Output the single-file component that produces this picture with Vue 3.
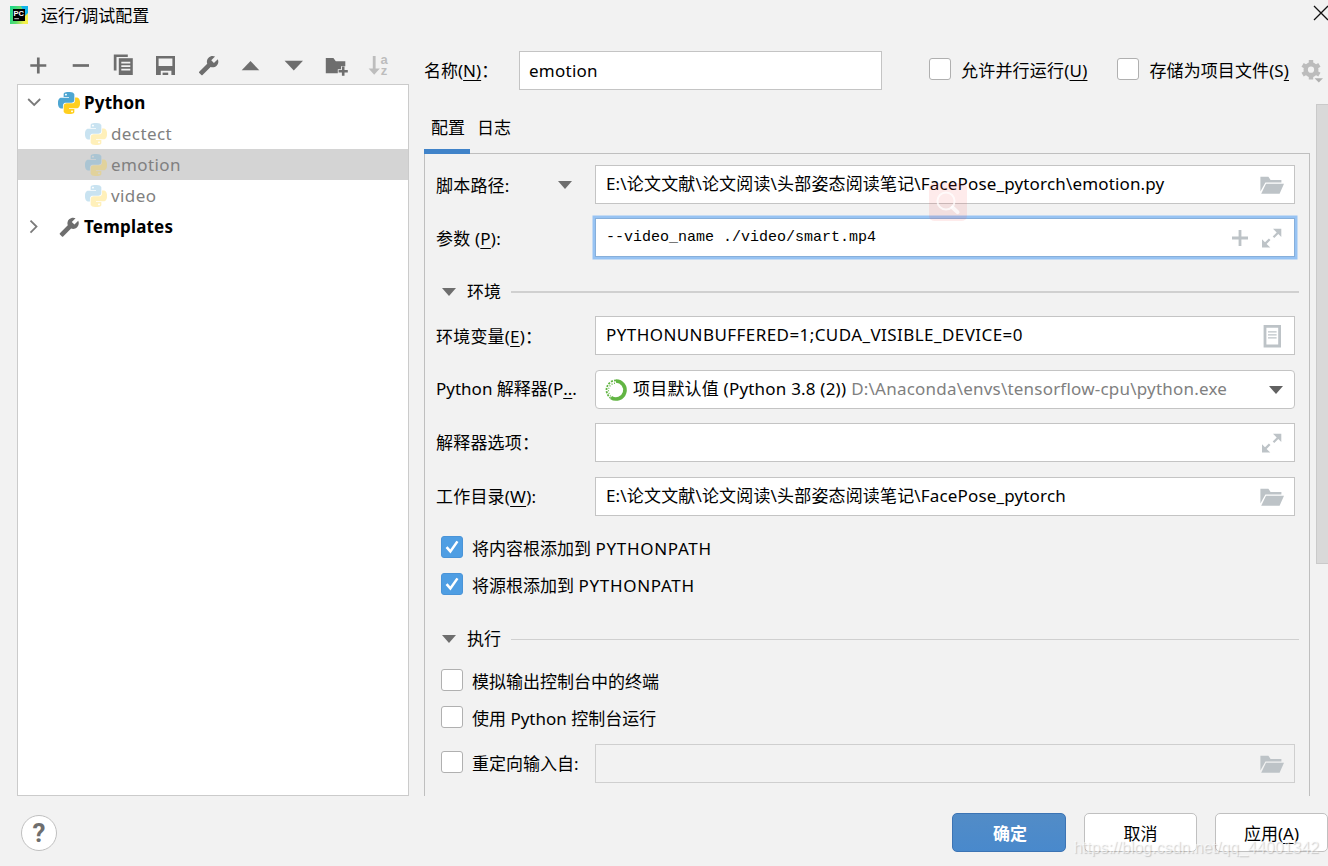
<template>
  <div class="dialog">
    <!-- 标题栏 -->
    <header class="titlebar">
      <svg class="app-icon" viewBox="0 0 18 18">
        <defs>
          <linearGradient id="pc" x1="0" y1="0.4" x2="1" y2="0.7">
            <stop offset="0" stop-color="#21d789" />
            <stop offset="0.45" stop-color="#5fdc6a" />
            <stop offset="0.85" stop-color="#f4f04a" />
          </linearGradient>
        </defs>
        <rect width="18" height="18" fill="url(#pc)" />
        <path d="M11 0h7v7l-3 3z" fill="#12b5ea" />
        <rect x="3" y="3" width="12" height="12" fill="#000" />
        <text x="3.4" y="9.6" class="app-icon__text">PC</text>
        <rect x="4.3" y="12.2" width="4.6" height="1" fill="#ccc" />
      </svg>
      <span class="titlebar__text">运行/调试配置</span>
      <svg class="titlebar__close" viewBox="0 0 16 16"><path d="M1 1l14 14M15 1L1 15" stroke="#111" stroke-width="1.3" /></svg>
    </header>

    <div class="main">
      <!-- 左侧配置列表 -->
      <aside class="sidebar">
        <div class="toolbar">
          <svg viewBox="0 0 24 24"><path d="M4.3 12.5h16M12.3 4.6v15.8" class="stroke" /></svg>
          <svg viewBox="0 0 24 24"><path d="M3.7 12.5H20" class="stroke" /></svg>
          <svg viewBox="0 0 24 24">
            <path d="M2.8 17.6V1.4h14v2.5H5.5v13.7z" />
            <path d="M7.8 5.2h14V22h-14z" />
            <path d="M10.3 9.6h9M10.3 13.1h9M10.3 16.6h9" stroke="#f2f2f2" stroke-width="1.6" />
          </svg>
          <svg viewBox="0 0 24 24">
            <path fill-rule="evenodd" d="M2 3h19v19h-3.6v-4.3H6.8V22H2zM4.6 5.6V13h13.8V5.6z" />
            <path d="M8.6 19.6h5.6V22H8.6z" />
          </svg>
          <svg viewBox="0 0 24 24"><path :d="wrench" transform="translate(23.2 2) scale(-.88 .88)" /></svg>
          <svg viewBox="0 0 24 24"><path d="M2.7 17.2L11.5 8l8.8 9.2z" /></svg>
          <svg viewBox="0 0 24 24"><path d="M2.6 7.8h18.4l-9.2 9.6z" /></svg>
          <svg viewBox="0 0 24 24">
            <path d="M1.8 5h7.6l2.4 3.2h9.5v5H17v3.1h-3.2v4H1.8z" />
            <path d="M19.2 13.6v9.2M14.6 18.2h9.2" stroke="#6e6e6e" stroke-width="2.6" />
          </svg>
          <svg viewBox="0 0 24 24" class="is-disabled">
            <path d="M5.8 3h2.8v12.6h4.2l-5.6 6.2-5.6-6.2h4.2z" />
            <text x="13.6" y="11">a</text>
            <text x="13.8" y="22.2">z</text>
          </svg>
        </div>

        <div class="tree">
          <div
            v-for="node in tree"
            :key="node.label"
            class="tree__row"
            :class="{ '-child': node.child, '-selected': node.label === selected }"
            @click="selected = node.label"
          >
            <svg v-if="!node.child" class="tree__arrow" viewBox="0 0 16 16">
              <path :d="node.open ? 'M2.2 4l6 6 6-6' : 'M4.5 1.6l6 6-6 6'" />
            </svg>
            <svg v-if="node.icon === 'python'" class="tree__icon" viewBox="0 0 24 24">
              <path :d="snake" fill="#4ea6d2" />
              <path :d="snake" fill="#ffcf1f" transform="rotate(180 12 12)" />
            </svg>
            <svg v-else class="tree__icon" viewBox="0 0 24 24">
              <path :d="wrench" fill="#6e6e6e" transform="translate(23.6 .8) scale(-.95 .95)" />
            </svg>
            <span>{{ node.label }}</span>
          </div>
        </div>
      </aside>

      <!-- 右侧表单 -->
      <section class="content">
        <div class="name-row">
          <label class="name-row__label">名称(<u>N)</u>：</label>
          <input v-model="name" class="field name-row__input" />
          <label class="check -parallel"><i class="check__box"></i><span>允许并行运行(<u>U)</u></span></label>
          <label class="check -store"><i class="check__box"></i><span>存储为项目文件(S<u>)</u></span></label>
          <svg class="gear" viewBox="0 0 24 24">
            <circle cx="11" cy="10.7" r="5.3" />
            <path d="M11 1v4M11 16.4v4M2.6 5.8l3.4 2M16 13.6l3.4 2M19.4 5.8l-3.4 2M6 13.6l-3.4 2" />
            <path d="M14.6 19.2h8.4l-4.2 4.2z" class="gear__drop" />
          </svg>
        </div>

        <div class="tabs">
          <div class="tabs__item -active">配置</div>
          <div class="tabs__item">日志</div>
        </div>

        <div class="panel">
          <div class="row">
            <div class="row__label -low">脚本路径:
              <svg class="drop" viewBox="0 0 14 8"><path d="M0 0h14L7 8z" /></svg>
            </div>
            <div class="field">
              <span class="path">E:\论文文献\论文阅读\头部姿态阅读笔记\FacePose_pytorch\emotion.py</span>
              <svg class="icon" viewBox="0 0 24 24"><path :d="folder" /></svg>
            </div>
          </div>
          <div class="row -params">
            <div class="row__label -low">参数 (<u>P</u>):</div>
            <div class="field -focus">
              <span class="mono">--video_name ./video/smart.mp4</span>
              <svg class="icon -plus" viewBox="0 0 24 24"><path d="M10.6 4h2.8v6.6H20v2.8h-6.6V20h-2.8v-6.6H4v-2.8h6.6z" /></svg>
              <svg class="icon" viewBox="0 0 24 24"><path :d="expand" /></svg>
            </div>
          </div>

          <div class="group -env">
            <svg class="drop" viewBox="0 0 14 8"><path d="M0 0h14L7 8z" /></svg>
            <span>环境</span><i></i>
          </div>

          <div class="row">
            <div class="row__label -low">环境变量(<u>E</u>)：</div>
            <div class="field">
              <span class="vars">PYTHONUNBUFFERED=1;CUDA_VISIBLE_DEVICE=0</span>
              <svg class="icon" viewBox="0 0 24 24">
                <path fill-rule="evenodd" d="M3.6 1h17.4v22.4H3.6zM6.4 3.8v16.8h11.8V3.8z" />
                <path d="M8 7.2h8.6v1.4H8zM8 10.2h8.6v1.4H8zM8 13.2h8.6v1.4H8z" />
              </svg>
            </div>
          </div>
          <div class="row">
            <div class="row__label -high">Python 解释器(P<u>..</u>.</div>
            <div class="field -select">
              <svg class="conda" viewBox="0 0 24 24">
                <path d="M12 3a9 9 0 1 1-5 16.5" />
                <path class="conda__dots" d="M12 2.4a9.6 9.6 0 0 0-5.5 17.4" />
                <path class="conda__dots -inner" d="M11 5.2a7.2 7.2 0 0 0-4.4 12.3" />
              </svg>
              <span class="sdk">项目默认值 (Python 3.8 (2))</span>
              <span class="sdk-path">D:\Anaconda\envs\tensorflow-cpu\python.exe</span>
              <svg class="drop" viewBox="0 0 14 8"><path d="M0 0h14L7 8z" /></svg>
            </div>
          </div>
          <div class="row -options">
            <div class="row__label">解释器选项：</div>
            <div class="field">
              <span></span>
              <svg class="icon" viewBox="0 0 24 24"><path :d="expand" /></svg>
            </div>
          </div>
          <div class="row -dir">
            <div class="row__label">工作目录(<u>W</u>):</div>
            <div class="field">
              <span class="path">E:\论文文献\论文阅读\头部姿态阅读笔记\FacePose_pytorch</span>
              <svg class="icon" viewBox="0 0 24 24"><path :d="folder" /></svg>
            </div>
          </div>

          <div class="checks">
            <label v-for="item in pathOptions" :key="item" class="check">
              <i class="check__box -checked">
                <svg viewBox="0 0 22 22"><path d="M5 11.2l4.2 4.6L17 4.8" /></svg>
              </i>
              <span>{{ item }} <span class="caps">PYTHONPATH</span></span>
            </label>
          </div>

          <div class="group -run">
            <svg class="drop" viewBox="0 0 14 8"><path d="M0 0h14L7 8z" /></svg>
            <span>执行</span><i></i>
          </div>

          <div class="checks -run">
            <label v-for="item in runOptions" :key="item" class="check"><i class="check__box"></i><span>{{ item }}</span></label>
          </div>
          <div class="row -redirect">
            <label class="check"><i class="check__box"></i><span>重定向输入自:</span></label>
            <div class="field -disabled">
              <span></span>
              <svg class="icon" viewBox="0 0 24 24"><path :d="folder" /></svg>
            </div>
          </div>
        </div>
      </section>
    </div>

    <footer class="footer">
      <button class="help">?</button>
      <button class="btn -primary">确定</button>
      <button class="btn">取消</button>
      <button class="btn">应用(<u>A</u>)</button>
    </footer>

    <div class="scrollbar"></div>
    <div class="search-badge">
      <svg viewBox="0 0 38 38"><circle cx="17" cy="18" r="8.6" /><path d="M23.5 24.5l5 4.6" class="handle" /></svg>
    </div>
    <div class="watermark">https://blog.csdn.net/qq_44001342</div>
  </div>
</template>

<script setup>
import { ref } from 'vue'

const name = ref('emotion')
const selected = ref('emotion')

const tree = [
  { label: 'Python', icon: 'python', open: true },
  { label: 'dectect', icon: 'python', child: true },
  { label: 'emotion', icon: 'python', child: true },
  { label: 'video', icon: 'python', child: true },
  { label: 'Templates', icon: 'wrench', open: false }
]

const pathOptions = ['将内容根添加到', '将源根添加到']
const runOptions = ['模拟输出控制台中的终端', '使用 Python 控制台运行']

// 图标路径
const wrench =
  'M22.7 19l-9.1-9.1c.9-2.3.4-5-1.5-6.9-2-2-5-2.4-7.4-1.3L9 6 6 9 1.6 4.7C.4 7.1.9 10.1 2.9 12.1c1.9 1.9 4.6 2.4 6.9 1.5l9.1 9.1c.4.4 1 .4 1.4 0l2.3-2.3c.5-.4.5-1.1.1-1.4z'
const folder = 'M.4 18.6V3.8h8l2.2 3.2h10.8v2.6H5.4zM6 10.8h18l-4.4 10H1.2z'
const expand =
  'M13 2.7h8.3V11l-3-3-4 4-1.6-1.6 4-4zM10.3 21.5H2v-8.2l3 3 3.9-3.9 1.6 1.6-3.9 3.9z'
const snake =
  'M14.25.18l.9.2.73.26.59.3.45.32.34.34.25.34.16.33.1.3.04.26.02.2-.01.13V8.5l-.05.63-.13.55-.21.46-.26.38-.3.31-.33.25-.35.19-.35.14-.33.1-.3.07-.26.04-.21.02H8.77l-.69.05-.59.14-.5.22-.41.27-.33.32-.27.35-.2.36-.15.37-.1.35-.07.32-.04.27-.02.21v3.06H3.17l-.21-.03-.28-.07-.32-.12-.35-.18-.36-.26-.36-.36-.35-.46-.32-.59-.28-.73-.21-.88-.14-1.05-.05-1.23.06-1.22.16-1.04.24-.87.32-.71.36-.57.4-.44.42-.33.42-.24.4-.16.36-.1.32-.05.24-.01h.16l.06.01h8.16v-.83H6.18l-.01-2.75-.02-.37.05-.34.11-.31.17-.28.25-.26.31-.23.38-.2.44-.18.51-.15.58-.12.64-.1.71-.06.77-.04.84-.02 1.27.05zm-6.3 1.98l-.23.33-.08.41.08.41.23.34.33.22.41.09.41-.09.33-.22.23-.34.08-.41-.08-.41-.23-.33-.33-.22-.41-.09-.41.09z'
</script>

<style>
body {
  margin: 0;
  overflow: hidden;
  background: #f2f2f2;
}
</style>

<style scoped>
* {
  box-sizing: border-box;
}

.dialog {
  position: relative;
  display: flex;
  flex-direction: column;
  width: 1328px;
  height: 866px;
  overflow: hidden;
  background: #f2f2f2;
  color: #000;
  font: 17px/24px 'Noto Sans', 'Noto Sans CJK SC', sans-serif;
  white-space: nowrap;
}

u {
  text-underline-offset: 3px;
  text-decoration-thickness: 1px;
}

/* 标题栏 */
.titlebar {
  display: flex;
  align-items: center;
  height: 32px;
  padding-left: 10px;
}

.app-icon {
  width: 18px;
  height: 18px;
  margin: -2px 13px 0 0;
}

.app-icon__text {
  fill: #fff;
  font: bold 7.6px 'Liberation Sans', sans-serif;
}

.titlebar__close {
  width: 16px;
  height: 16px;
  margin: -6px -1px 0 auto;
}

.main {
  display: flex;
  height: 764px;
}

/* 左侧 */
.sidebar {
  display: flex;
  flex-direction: column;
  width: 392px;
  margin-left: 17px;
}

.toolbar {
  display: flex;
  gap: 18.6px;
  height: 52px;
  padding: 21px 0 0 9px;
}

.toolbar svg {
  flex: none;
  width: 24px;
  height: 24px;
  fill: #6e6e6e;
}

.toolbar .stroke {
  stroke: #6e6e6e;
  stroke-width: 2.7;
}

.toolbar .is-disabled {
  fill: #bdbdbd;
  font: bold 13px 'Liberation Sans', sans-serif;
}

.tree {
  flex: 1;
  padding-top: 2px;
  border: 1px solid #cbcbcb;
  background: #fff;
}

.tree__row {
  display: flex;
  align-items: center;
  height: 31px;
  padding-left: 8px;
  font-weight: bold;
  letter-spacing: 0.2px;
}

.tree__arrow {
  width: 16px;
  height: 16px;
  margin-right: 16px;
  fill: none;
  stroke: #7a7a7a;
  stroke-width: 1.8;
}

.tree__icon {
  width: 22px;
  height: 22px;
  margin-right: 4px;
}

.tree__row.-child {
  padding-left: 67px;
  color: #808080;
  font-weight: normal;
  letter-spacing: 0.4px;
}

.tree__row.-child .tree__icon {
  opacity: 0.3;
}

.tree__row.-selected {
  background: #d4d4d4;
}

/* 右侧 */
.content {
  width: 886px;
  margin-left: 15px;
}

.field {
  display: flex;
  align-items: center;
  height: 39px;
  padding: 0 10px;
  border: 1px solid #c4c4c4;
  background: #fff;
}

.field > span {
  margin-top: -2px;
}

.name-row {
  display: flex;
  align-items: center;
  width: 904px;
  height: 39px;
  margin-top: 19px;
}

.name-row__label {
  width: 95px;
}

.name-row__input {
  width: 363px;
  padding: 0 9px;
  color: #000;
  font: inherit;
  letter-spacing: 0.25px;
  outline: none;
}

.check {
  display: flex;
  align-items: center;
}

.check__box {
  flex: none;
  width: 22px;
  height: 22px;
  margin: -4px 10px 0 0;
  border: 1px solid #b0b0b0;
  border-radius: 3px;
  background: #fff;
}

.check__box.-checked {
  border-color: #4a94d8;
  background: #4f9ee3;
}

.check__box svg {
  display: block;
  width: 20px;
  height: 20px;
  fill: none;
  stroke: #fff;
  stroke-width: 2.8;
}

.check.-parallel {
  margin: 1px 0 0 47px;
  letter-spacing: 0.2px;
}

.check.-store {
  margin: 1px 0 0 30px;
  letter-spacing: 0.1px;
}

.gear {
  flex: none;
  width: 24px;
  height: 24px;
  margin-left: 11px;
  fill: none;
  stroke: #bcbcbc;
  stroke-width: 4.4;
}

.gear__drop {
  fill: #b0b0b0;
  stroke: none;
}

.tabs {
  display: flex;
  height: 64px;
  padding-top: 26px;
}

.tabs__item {
  position: relative;
  z-index: 1;
  width: 47px;
  height: 38px;
  padding-left: 7px;
}

.tabs__item.-active {
  width: 46px;
  border-bottom: 5px solid #4083c9;
}

.panel {
  height: 643px;
  margin-top: -1px;
  padding: 11px 0 0 11px;
  border: 1px solid #bfbfbf;
  border-bottom: none;
}

.row {
  display: grid;
  grid-template-columns: 159px 700px;
  align-items: center;
  height: 39px;
  margin-bottom: 15px;
}

.row.-params,
.row.-options {
  margin-top: -1px;
}

.row__label {
  display: flex;
  align-items: center;
  letter-spacing: 0.2px;
  white-space: pre;
}

.row__label.-low {
  padding-top: 2px;
}

.row__label.-high {
  padding-bottom: 2px;
  letter-spacing: 0;
}

.drop {
  width: 14px;
  height: 8px;
  fill: #6e6e6e;
}

.row__label .drop {
  margin: -2px 0 0 44px;
}

.icon {
  flex: none;
  width: 24px;
  height: 24px;
  margin-left: auto;
  fill: #bdc3c7;
}

.icon.-plus + .icon {
  margin-left: 8px;
}

.path {
  letter-spacing: 0.16px;
}

.vars {
  letter-spacing: 0.43px;
}

.caps {
  letter-spacing: 0.7px;
}

.field > .mono {
  margin-top: 0;
  font: 15px 'Liberation Mono', monospace;
}

.-focus {
  border-color: #87afda;
  box-shadow: 0 0 0 2.5px #97c3f3;
}

.-select {
  padding: 0 11px 0 8px;
  border-radius: 4px;
}

.-select .drop {
  margin-left: auto;
  fill: #616161;
}

.conda {
  width: 24px;
  height: 24px;
  margin-right: 5px;
  fill: none;
  stroke: #62b543;
  stroke-width: 3.6;
}

.conda__dots {
  stroke-width: 1.8;
  stroke-dasharray: 2 1.2;
}

.conda__dots.-inner {
  stroke-width: 1.2;
  stroke-dasharray: 1 1.6;
}

.sdk {
  letter-spacing: 0.2px;
}

.sdk-path {
  margin-left: 5px;
  color: #808080;
  letter-spacing: 0.21px;
}

.-disabled {
  border-color: #cfcfcf;
  background: #f2f2f2;
}

.group {
  display: flex;
  align-items: center;
  height: 24px;
  padding-left: 6px;
}

.group span {
  margin: 0 10px 0 11px;
}

.group i {
  flex: none;
  width: 788px;
  height: 1px;
  background: #d0d0d0;
}

.group.-env {
  margin: 23px 0 12px;
}

.group.-env i {
  height: 2px;
}

.checks {
  display: flex;
  flex-direction: column;
  gap: 13px;
  padding-left: 5px;
}

.panel .check {
  height: 24px;
}

.panel .check__box {
  margin-right: 9px;
}

.row.-dir {
  margin-bottom: 21px;
}

.group.-run {
  margin: 29px 0 19px;
}

.row.-redirect {
  margin-top: 13px;
}

.row.-redirect .check {
  padding-left: 5px;
}

/* 底部按钮 */
.footer {
  display: flex;
  align-items: center;
  gap: 18px;
  padding: 17px 0 0 21px;
}

.help {
  width: 36px;
  height: 36px;
  margin-right: auto;
  padding: 0;
  border: 1px solid #c0c0c0;
  border-radius: 50%;
  background: #fff;
  color: #6e6e6e;
  font: bold 26px/34px Roboto, sans-serif;
}

.btn {
  width: 113px;
  height: 39px;
  padding: 2px 0 0;
  border: 1px solid #c0c0c0;
  border-radius: 5px;
  background: #fff;
  color: #000;
  font: inherit;
}

.btn.-primary {
  width: 114px;
  padding-left: 2px;
  border-color: #3c74b4;
  background: linear-gradient(#528cc7, #4989cc);
  color: #fff;
  font-weight: bold;
}

/* 覆盖层 */
.scrollbar {
  position: absolute;
  top: 104px;
  right: 0;
  width: 12px;
  height: 460px;
  border: 1px solid #cacaca;
  border-right: none;
  background: #d9d9d9;
}

.search-badge {
  position: absolute;
  top: 183px;
  left: 929px;
  width: 38px;
  height: 38px;
  border-radius: 5px;
  background: rgba(244, 70, 70, 0.11);
}

.search-badge svg {
  display: block;
  fill: none;
  stroke: rgba(255, 255, 255, 0.75);
  stroke-width: 2;
}

.search-badge .handle {
  stroke-width: 4;
  stroke-linecap: round;
}

.watermark {
  position: absolute;
  right: 9px;
  bottom: 7px;
  color: rgba(255, 255, 255, 0.6);
  font: 16px/22px 'Liberation Sans', sans-serif;
  text-shadow: 1px 1px 1px rgba(120, 120, 120, 0.35);
  pointer-events: none;
}
</style>
